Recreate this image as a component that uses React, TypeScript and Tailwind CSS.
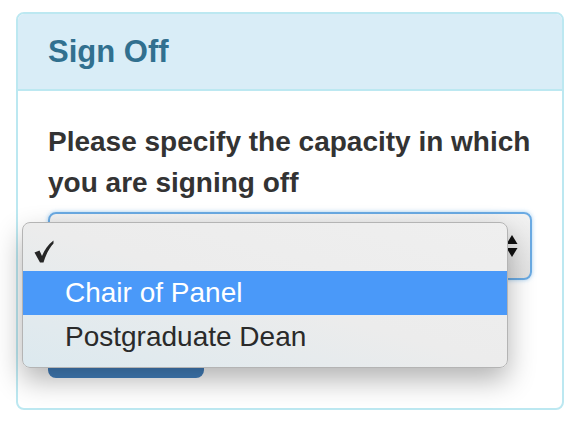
import React from 'react';

const font = { fontFamily: '"Liberation Sans", Arial, sans-serif' };

function Check() {
    return (
        <svg width="20" height="23" viewBox="0 0 20 23" className="block">
            <path d="M0.5 12.5 L5.5 10.5 L8 16 C10.5 10 14 4.5 19.5 0.5 L19.5 3.5 C15.5 8 12 14 9.5 22.5 L6 22.5 Z" fill="#262626" />
        </svg>
    );
}

export default function App() {
    return (
        <div className="w-[586px] h-[426px] bg-white pt-3 pl-4" style={font}>
            <div className="w-[548px] border-2 border-[#bce8f1] rounded-[8px] bg-white">
                {/* Heading */}
                <div className="bg-[#d9edf7] border-b-2 border-[#bce8f1] rounded-t-[6px] px-[30px] py-5">
                    <h3 className="text-[31px] leading-[35px] font-bold text-[#31708f]">Sign Off</h3>
                </div>

                {/* Body */}
                <div className="p-[30px]">
                    <label className="block text-[28px] leading-[41px] font-bold text-[#333] mb-[9px]">
                        Please specify the capacity in which you are signing off
                    </label>

                    <div className="relative">
                        <div className="h-[68px] rounded-[8px] border-2 border-[#6aaae3] bg-gradient-to-b from-[#f2f2f2] to-[#e2e2e2] shadow-[0_0_4px_rgba(102,175,233,0.6)] flex items-center justify-end pr-[12px]">
                            <svg width="12" height="24" viewBox="0 0 12 24">
                                <path d="M6 1 L11.5 10 L0.5 10 Z" fill="#111" />
                                <path d="M0.5 14 L11.5 14 L6 23 Z" fill="#111" />
                            </svg>
                        </div>

                        {/* native popup menu */}
                        <div className="absolute left-[-26px] top-[10px] w-[486px] rounded-[8px] border border-[#b4b4b4] bg-gradient-to-tr from-[#dce9ef] via-[#ececec] to-[#efefef] shadow-[0_12px_28px_rgba(0,0,0,0.3)] pt-[4px] pb-[8px] z-10 overflow-hidden">
                            <div className="h-[44px] flex items-center pl-[11px] pt-[4px]">
                                <Check />
                            </div>
                            <div className="h-[44px] flex items-center pl-[42px] bg-[#4a99f9] text-white text-[28px]">
                                Chair of Panel
                            </div>
                            <div className="h-[44px] flex items-center pl-[42px] text-[#2a2a2a] text-[28px]">
                                Postgraduate Dean
                            </div>
                        </div>
                    </div>

                    <div className="mt-[30px]">
                        <div className="w-[156px] h-[68px] rounded-[8px] bg-[#4380be]" />
                    </div>
                </div>
            </div>
        </div>
    );
}
